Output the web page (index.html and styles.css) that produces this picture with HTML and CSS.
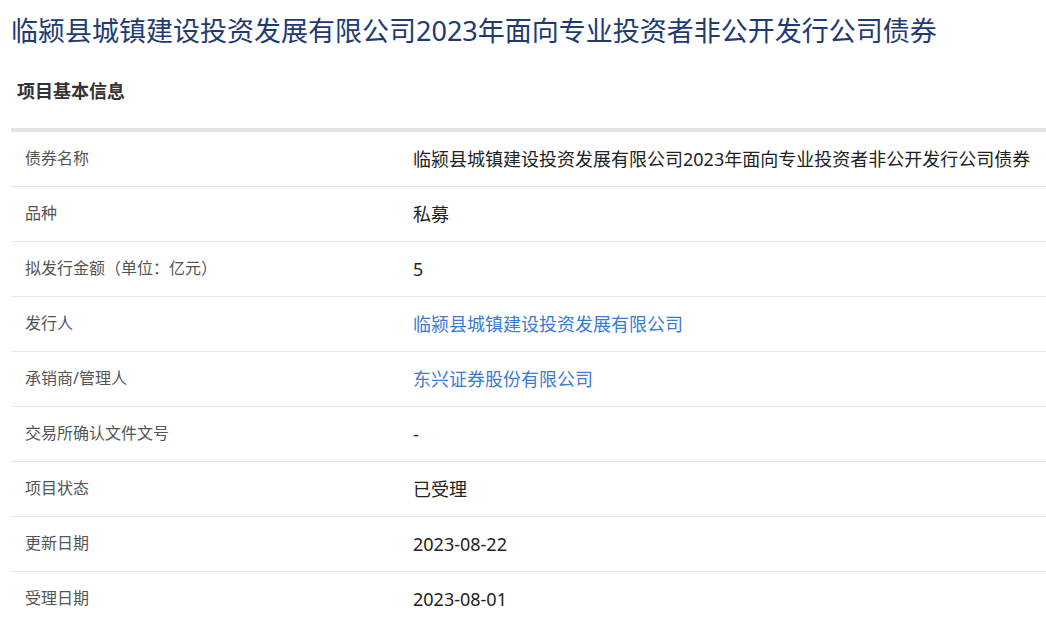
FILE: index.html
```html
<!DOCTYPE html>
<html lang="zh-CN">
<head>
<meta charset="utf-8">
<title>债券项目信息</title>
<link rel="stylesheet" href="styles.css">
</head>
<body>
<div class="page">
  <h1 class="title">临颍县城镇建设投资发展有限公司2023年面向专业投资者非公开发行公司债券</h1>
  <h2 class="section">项目基本信息</h2>
  <div class="table">
    <div class="row"><div class="label">债券名称</div><div class="value">临颍县城镇建设投资发展有限公司2023年面向专业投资者非公开发行公司债券</div></div>
    <div class="row"><div class="label">品种</div><div class="value">私募</div></div>
    <div class="row"><div class="label">拟发行金额（单位：亿元）</div><div class="value">5</div></div>
    <div class="row"><div class="label">发行人</div><div class="value link">临颍县城镇建设投资发展有限公司</div></div>
    <div class="row"><div class="label">承销商/管理人</div><div class="value link">东兴证券股份有限公司</div></div>
    <div class="row"><div class="label">交易所确认文件文号</div><div class="value">-</div></div>
    <div class="row"><div class="label">项目状态</div><div class="value">已受理</div></div>
    <div class="row"><div class="label">更新日期</div><div class="value">2023-08-22</div></div>
    <div class="row"><div class="label">受理日期</div><div class="value">2023-08-01</div></div>
  </div>
</div>
</body>
</html>
```
FILE: styles.css
```css
html, body {
  margin: 0;
  padding: 0;
  background: #ffffff;
}
body {
  font-family: "Noto Sans", "Noto Sans CJK SC", sans-serif;
}
.page {
  padding: 13px 0 0 11px;
}
.title {
  margin: 0;
  font-size: 27px;
  line-height: 36px;
  font-weight: 400;
  color: #213a72;
  white-space: nowrap;
}
.section {
  margin: 30px 0 0 0;
  padding-left: 6px;
  font-size: 18px;
  line-height: 24px;
  font-weight: 700;
  color: #333333;
}
.table {
  margin-top: 25px;
  border-top: 4px solid #e0e3e9;
}
.row {
  display: grid;
  grid-template-columns: 402px 1fr;
  align-items: center;
  height: 54px;
  border-bottom: 1px solid #e3e5ea;
}
.label {
  padding-left: 14px;
  font-size: 16px;
  line-height: 22px;
  color: #555555;
  margin-top: -3px;
}
.value {
  font-size: 18px;
  line-height: 24px;
  color: #222222;
  white-space: nowrap;
}
.value.link {
  color: #3b7bd8;
}
```
